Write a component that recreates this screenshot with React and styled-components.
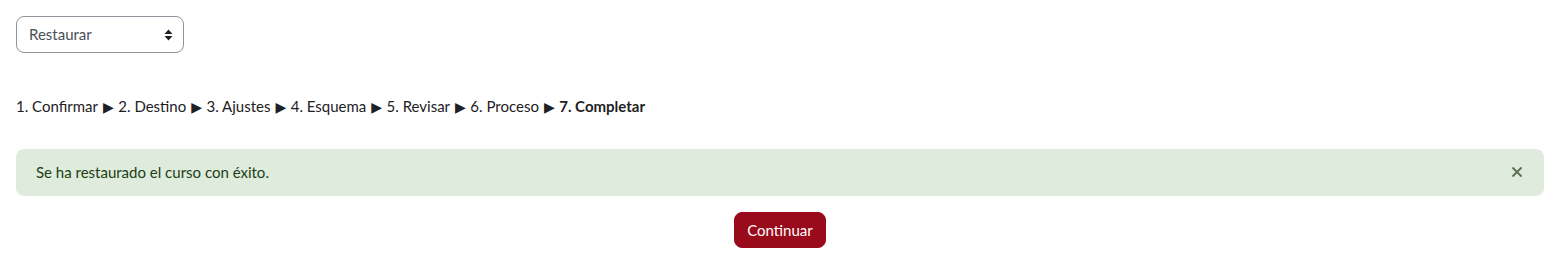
import styled, { createGlobalStyle } from "styled-components";

const GlobalStyle = createGlobalStyle`
  body {
    margin: 0;
    background: #fff;
    font-family: Lato, "Liberation Sans", sans-serif;
    font-size: 15px;
    line-height: 1.5;
    color: #1d2125;
  }
`;

const Page = styled.main`
  padding: 16px;
`;

const SelectWrap = styled.div`
  position: relative;
  display: inline-block;
`;

const Select = styled.select`
  appearance: none;
  width: 168px;
  height: 37px;
  padding: 6px 32px 6px 12px;
  font-family: inherit;
  font-size: 15px;
  line-height: 1.5;
  color: #495057;
  background: #fff;
  border: 1px solid #8f959e;
  border-radius: 8px;
`;

const Caret = styled.svg`
  position: absolute;
  right: 11px;
  top: 13px;
  pointer-events: none;
`;

const Steps = styled.div`
  margin-top: 42px;
  display: flex;
  flex-wrap: wrap;
  align-items: baseline;
  height: 22px;
`;

const Step = styled.span`
  font-weight: ${(p) => (p.$current ? 700 : 400)};
  white-space: pre;
`;

const Arrow = styled.span`
  font-family: "DejaVu Sans", sans-serif;
  font-size: 14px;
  line-height: 1;
  color: #1d2125;
  margin: 0 4.5px 0 5px;
  white-space: pre;
`;

const Alert = styled.div`
  margin-top: 32px;
  margin-bottom: 16px;
  display: flex;
  align-items: center;
  justify-content: space-between;
  padding: 12px 20px;
  background: #dfebdc;
  color: #1c3f15;
  border-radius: 8px;
`;

const Close = styled.button`
  border: none;
  background: transparent;
  padding: 0;
  margin-right: 1px;
  display: flex;
  color: #5a6e56;
  cursor: pointer;
`;

const Actions = styled.div`
  display: flex;
  justify-content: center;
`;

const Button = styled.button`
  font-family: inherit;
  font-size: 15px;
  line-height: 1.5;
  padding: 6px 12px;
  color: #fff;
  background: #990a1b;
  border: 1px solid #990a1b;
  border-radius: 8px;
  cursor: pointer;
`;

const steps = [
  "1. Confirmar",
  "2. Destino",
  "3. Ajustes",
  "4. Esquema",
  "5. Revisar",
  "6. Proceso",
  "7. Completar",
];

export default function App() {
  return (
    <Page>
      <GlobalStyle />
      <SelectWrap>
        <Select defaultValue="restaurar">
          <option value="restaurar">Restaurar</option>
        </Select>
        <Caret width="9" height="12" viewBox="0 0 9 12">
          <path d="M4.5 0.5 L8.5 5 H0.5 Z M4.5 11.5 L8.5 7 H0.5 Z" fill="#1d2125" />
        </Caret>
      </SelectWrap>
      <Steps>
        {steps.map((s, i) => (
          <span key={s}>
            <Step $current={i === steps.length - 1}>{s}</Step>
            {i < steps.length - 1 && <Arrow>▶</Arrow>}
          </span>
        ))}
      </Steps>
      <Alert>
        <span>Se ha restaurado el curso con éxito.</span>
        <Close aria-label="Cerrar">
          <svg width="12" height="12" viewBox="0 0 12 12">
            <path d="M1.5 1.5 L10.5 10.5 M10.5 1.5 L1.5 10.5" stroke="currentColor" strokeWidth="1.8" />
          </svg>
        </Close>
      </Alert>
      <Actions>
        <Button>Continuar</Button>
      </Actions>
    </Page>
  );
}
